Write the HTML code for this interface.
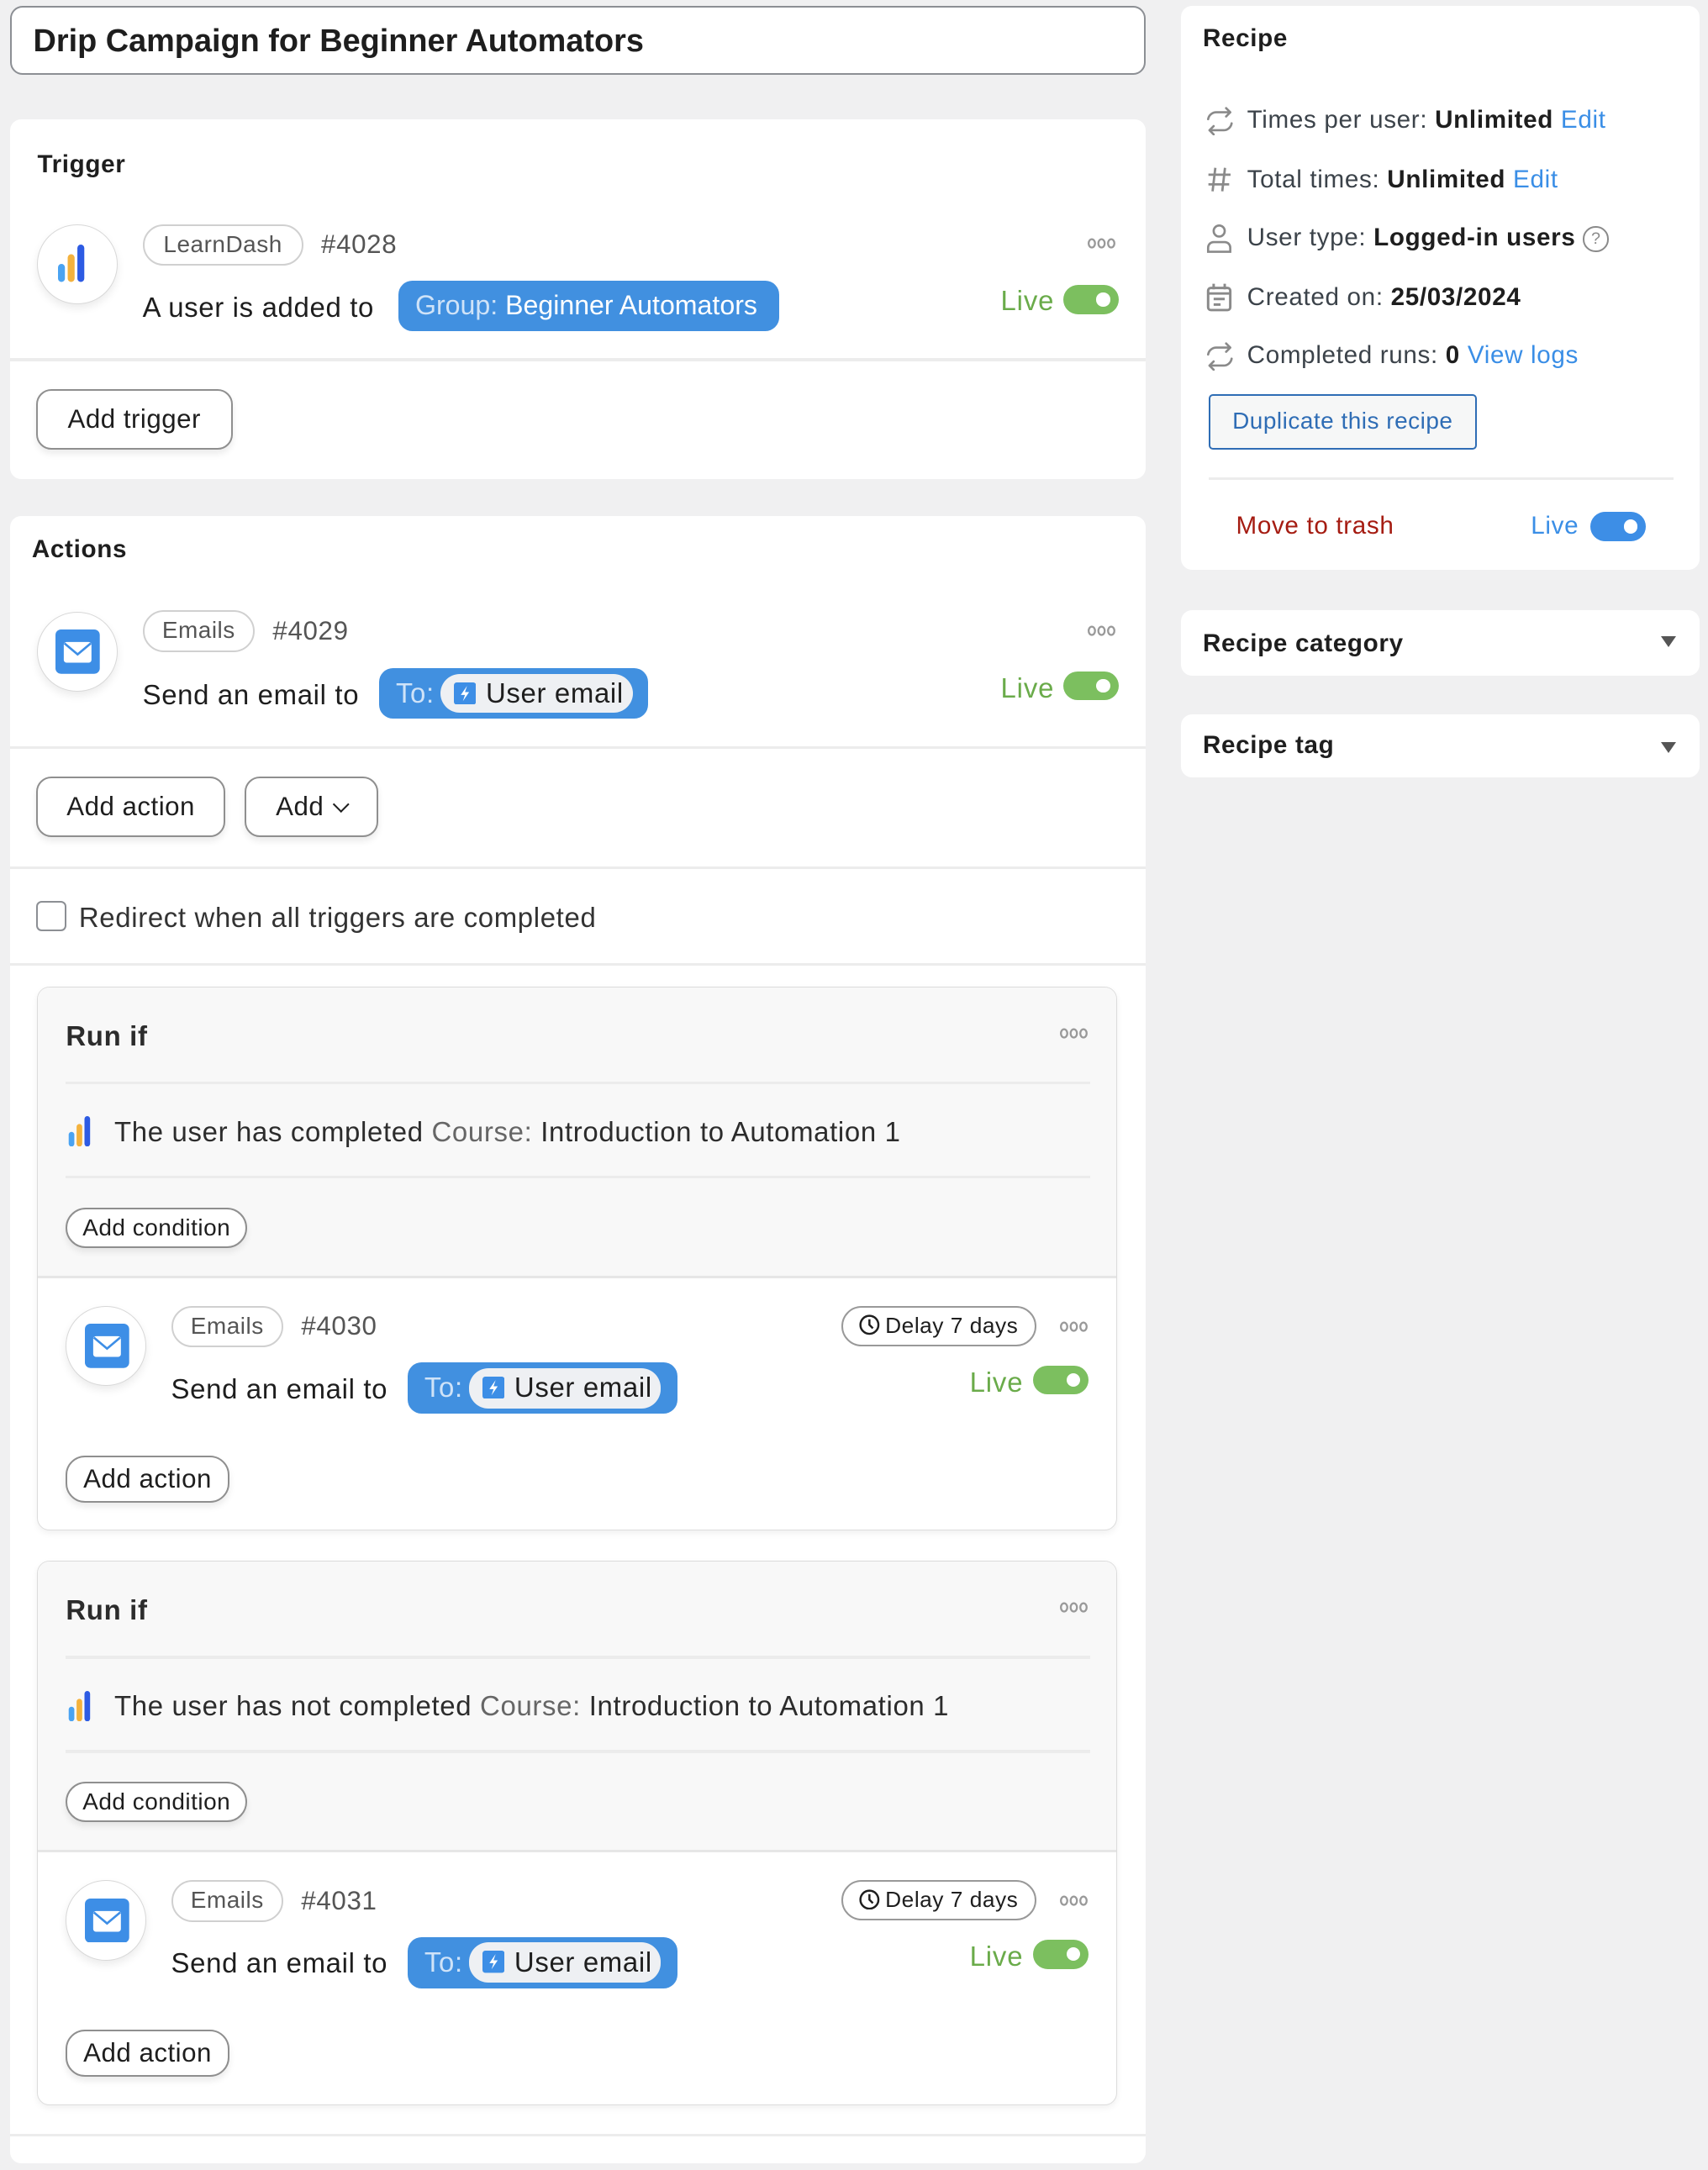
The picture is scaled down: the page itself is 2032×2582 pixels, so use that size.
<!DOCTYPE html>
<html><head><meta charset="utf-8"><style>
html,body{margin:0;padding:0;background:#f0f0f1;}
body{width:1234px;height:1568px;zoom:1.64668;position:relative;overflow:hidden;font-family:"Liberation Sans",sans-serif;color:#1e1e1e;}
.a{position:absolute;white-space:nowrap;}
.card{position:absolute;background:#fff;border-radius:8px;}
.t20{font-size:20px;line-height:24px;letter-spacing:0.4px;}
.t18{font-size:18px;line-height:22px;letter-spacing:0.4px;}
.b{font-weight:bold;}
.hr{position:absolute;height:2px;background:#ececec;}
.pill{position:absolute;border:1.5px solid #d0d0d0;border-radius:16px;box-sizing:border-box;color:#555;font-size:17px;text-align:center;background:#fff;letter-spacing:0.3px;white-space:nowrap;}
.btn{position:absolute;border:1.5px solid #8f8f8f;border-radius:11px;box-sizing:border-box;background:#fff;font-size:19px;color:#1e1e1e;text-align:center;box-shadow:0 3px 5px rgba(0,0,0,.08);letter-spacing:0.3px;white-space:nowrap;}
.circ{position:absolute;width:58px;height:58px;border-radius:50%;background:#fff;border:1px solid #d8d8d8;box-sizing:border-box;box-shadow:0 3px 6px rgba(0,0,0,.08);}
.live{position:absolute;color:#6aab4a;font-size:20px;line-height:24px;letter-spacing:0.5px;}
.tog{position:absolute;width:40px;height:21px;border-radius:11px;background:#7cbf5f;}
.tog:after{content:"";position:absolute;right:6px;top:5.5px;width:10px;height:10px;border-radius:50%;background:#fff;}
.blue{position:absolute;background:#4190e0;border-radius:10px;color:#fff;font-size:20px;letter-spacing:0.4px;white-space:nowrap;}
.ue{position:absolute;background:#eef0f3;border-radius:14px;color:#1e1e1e;font-size:20px;}
.run{position:absolute;left:27px;width:780px;height:393px;border:1px solid #dcdcdc;border-radius:9px;background:#fff;box-sizing:border-box;box-shadow:0 2px 5px rgba(0,0,0,.06);overflow:hidden;}
.run .top{position:absolute;left:0;top:0;width:100%;height:208px;background:#f8f8f8;border-bottom:2px solid #e6e6e6;}
.side{color:#3c434a;}
.lnk{color:#3a8ee6;}
</style></head><body>

<svg width="0" height="0" style="position:absolute">
<defs>
<g id="ld"><rect x="0" y="14" width="5" height="13" rx="2.5" fill="#4aa3f2"/><rect x="7" y="7" width="5" height="20" rx="2.5" fill="#f4b23d"/><rect x="14" y="0" width="5" height="27" rx="2.5" fill="#2d5be3"/></g>
<g id="em"><rect x="0" y="0" width="32" height="32" rx="4" fill="#3d8ee6"/><rect x="6" y="9" width="20" height="15" rx="2" fill="#fff"/><path d="M6.5 10 L16 18 L25.5 10" fill="none" stroke="#3d8ee6" stroke-width="1.6"/></g>
<g id="bolt"><rect x="0" y="0" width="16" height="16" rx="2" fill="#3d8ee6"/><path d="M9.5 2.5 L5 9 H8 L6.5 13.5 L11 7 H8 Z" fill="#fff"/></g>
<g id="dt" fill="none" stroke="#999" stroke-width="1.4"><ellipse cx="3" cy="4" rx="2.3" ry="3"/><ellipse cx="10" cy="4" rx="2.3" ry="3"/><ellipse cx="17" cy="4" rx="2.3" ry="3"/></g>
<g id="clk" fill="none" stroke="#1e1e1e" stroke-width="1.5"><circle cx="7.5" cy="7.5" r="6.5"/><path d="M7.5 3.5 V7.5 L10 10"/></g>
</defs></svg>

<!-- title -->
<div class="a" style="left:7px;top:4px;width:821px;height:50px;border:1.5px solid #8c8f94;border-radius:9px;background:#fff;box-sizing:border-box;"></div>
<div class="a b" style="left:24px;top:15px;font-size:23px;line-height:30px;color:#1e1e1e;">Drip Campaign for Beginner Automators</div>

<!-- Trigger card -->
<div class="card" style="left:7px;top:86px;width:821px;height:260px;"></div>
<div class="a b t18" style="left:27px;top:108px;">Trigger</div>
<div class="circ" style="left:27px;top:162px;"></div>
<svg class="a" style="left:42px;top:177px" width="30" height="30"><use href="#ld"/></svg>
<div class="pill" style="left:103px;top:162px;width:116px;height:30px;line-height:27px;">LearnDash</div>
<div class="a" style="left:232px;top:166px;font-size:19px;line-height:22px;color:#555;letter-spacing:0.4px">#4028</div>
<div class="a t20" style="left:103px;top:210px;">A user is added to</div>
<div class="blue" style="left:288px;top:203px;width:275px;height:36px;line-height:36px;letter-spacing:0;font-size:19.5px;"><span style="margin-left:12px;color:#cfe3f8">Group:</span> Beginner Automators</div>
<svg class="a" style="left:786px;top:172px" width="21" height="9"><use href="#dt"/></svg>
<div class="live" style="left:723px;top:205px;">Live</div>
<div class="tog" style="left:768px;top:206px;"></div>
<div class="hr" style="left:7px;top:259px;width:821px;"></div>
<div class="btn" style="left:26px;top:281px;width:142px;height:44px;line-height:41px;">Add trigger</div>

<!-- Actions card -->
<div class="card" style="left:7px;top:373px;width:821px;height:1190px;"></div>
<div class="a b t18" style="left:23px;top:386px;">Actions</div>
<div class="circ" style="left:27px;top:442px;"></div>
<svg class="a" style="left:40px;top:455px" width="32" height="32"><use href="#em"/></svg>
<div class="pill" style="left:103px;top:441px;width:81px;height:30px;line-height:27px;">Emails</div>
<div class="a" style="left:197px;top:445px;font-size:19px;line-height:22px;color:#555;letter-spacing:0.4px">#4029</div>
<div class="a t20" style="left:103px;top:490px;">Send an email to</div>
<div class="blue" style="left:274px;top:483px;width:194px;height:36px;"><span class="a" style="left:12px;top:6px;line-height:24px;color:#cfe3f8">To:</span>
 <div class="ue" style="left:44px;top:4px;width:139px;height:28px;"><svg class="a" style="left:10px;top:6px" width="16" height="16"><use href="#bolt"/></svg><span class="a" style="left:33px;top:2px;line-height:24px">User email</span></div></div>
<svg class="a" style="left:786px;top:452px" width="21" height="9"><use href="#dt"/></svg>
<div class="live" style="left:723px;top:485px;">Live</div>
<div class="tog" style="left:768px;top:485px;"></div>
<div class="hr" style="left:7px;top:539px;width:821px;"></div>
<div class="btn" style="left:26px;top:561px;width:137px;height:44px;line-height:41px;">Add action</div>
<div class="btn" style="left:177px;top:561px;width:96px;height:44px;line-height:41px;">Add <span style="display:inline-block;width:7px;height:7px;border-right:1.5px solid #1e1e1e;border-bottom:1.5px solid #1e1e1e;transform:rotate(45deg);position:relative;top:-4px;margin-left:3px"></span></div>
<div class="hr" style="left:7px;top:626px;width:821px;"></div>
<div class="a" style="left:26px;top:651px;width:22px;height:22px;border:1.5px solid #8c8f94;border-radius:4px;box-sizing:border-box;background:#fff"></div>
<div class="a t20" style="left:57px;top:651px;color:#333">Redirect when all triggers are completed</div>
<div class="hr" style="left:7px;top:696px;width:821px;"></div>

<!-- Run if 1 -->
<div class="run" style="top:713px;"><div class="top"></div>
 <div class="a b t20" style="left:20px;top:23px;color:#2c2c2c">Run if</div>
 <svg class="a" style="left:738px;top:29px" width="21" height="9"><use href="#dt"/></svg>
 <div class="hr" style="left:20px;top:68px;width:740px;"></div>
 <svg class="a" style="left:20px;top:93px" width="20" height="22" viewBox="0 0 19 27"><use href="#ld"/></svg>
 <div class="a t20" style="left:55px;top:92px;color:#2c2c2c">The user has completed <span style="color:#666">Course:</span> Introduction to Automation 1</div>
 <div class="hr" style="left:20px;top:136px;width:740px;"></div>
 <div class="btn" style="left:20px;top:159px;width:131px;height:29px;line-height:27px;font-size:17px;border-radius:15px;">Add condition</div>
 <div class="circ" style="left:20px;top:230px;"></div>
 <svg class="a" style="left:34px;top:243px" width="32" height="32"><use href="#em"/></svg>
 <div class="pill" style="left:96px;top:230px;width:81px;height:30px;line-height:27px;">Emails</div>
 <div class="a" style="left:190px;top:234px;font-size:19px;line-height:22px;color:#555;letter-spacing:0.4px">#4030</div>
 <div class="pill" style="left:580px;top:230px;width:141px;height:29px;line-height:26px;color:#1e1e1e;border-color:#999;border-radius:15px;font-size:16px;"><svg width="15" height="15" style="vertical-align:-2px;margin-right:4px"><use href="#clk"/></svg>Delay 7 days</div>
 <svg class="a" style="left:738px;top:241px" width="21" height="9"><use href="#dt"/></svg>
 <div class="a t20" style="left:96px;top:278px;">Send an email to</div>
 <div class="blue" style="left:267px;top:271px;width:195px;height:37px;"><span class="a" style="left:12px;top:6px;line-height:24px;color:#cfe3f8">To:</span>
  <div class="ue" style="left:44px;top:4px;width:139px;height:29px;"><svg class="a" style="left:10px;top:6px" width="16" height="16"><use href="#bolt"/></svg><span class="a" style="left:33px;top:2px;line-height:24px">User email</span></div></div>
 <div class="live" style="left:673px;top:273px;">Live</div>
 <div class="tog" style="left:719px;top:273px;"></div>
 <div class="btn" style="left:20px;top:338px;width:118px;height:34px;line-height:31px;border-radius:14px;">Add action</div>
</div>

<!-- Run if 2 -->
<div class="run" style="top:1128px;"><div class="top"></div>
 <div class="a b t20" style="left:20px;top:23px;color:#2c2c2c">Run if</div>
 <svg class="a" style="left:738px;top:29px" width="21" height="9"><use href="#dt"/></svg>
 <div class="hr" style="left:20px;top:68px;width:740px;"></div>
 <svg class="a" style="left:20px;top:93px" width="20" height="22" viewBox="0 0 19 27"><use href="#ld"/></svg>
 <div class="a t20" style="left:55px;top:92px;color:#2c2c2c">The user has not completed <span style="color:#666">Course:</span> Introduction to Automation 1</div>
 <div class="hr" style="left:20px;top:136px;width:740px;"></div>
 <div class="btn" style="left:20px;top:159px;width:131px;height:29px;line-height:27px;font-size:17px;border-radius:15px;">Add condition</div>
 <div class="circ" style="left:20px;top:230px;"></div>
 <svg class="a" style="left:34px;top:243px" width="32" height="32"><use href="#em"/></svg>
 <div class="pill" style="left:96px;top:230px;width:81px;height:30px;line-height:27px;">Emails</div>
 <div class="a" style="left:190px;top:234px;font-size:19px;line-height:22px;color:#555;letter-spacing:0.4px">#4031</div>
 <div class="pill" style="left:580px;top:230px;width:141px;height:29px;line-height:26px;color:#1e1e1e;border-color:#999;border-radius:15px;font-size:16px;"><svg width="15" height="15" style="vertical-align:-2px;margin-right:4px"><use href="#clk"/></svg>Delay 7 days</div>
 <svg class="a" style="left:738px;top:241px" width="21" height="9"><use href="#dt"/></svg>
 <div class="a t20" style="left:96px;top:278px;">Send an email to</div>
 <div class="blue" style="left:267px;top:271px;width:195px;height:37px;"><span class="a" style="left:12px;top:6px;line-height:24px;color:#cfe3f8">To:</span>
  <div class="ue" style="left:44px;top:4px;width:139px;height:29px;"><svg class="a" style="left:10px;top:6px" width="16" height="16"><use href="#bolt"/></svg><span class="a" style="left:33px;top:2px;line-height:24px">User email</span></div></div>
 <div class="live" style="left:673px;top:273px;">Live</div>
 <div class="tog" style="left:719px;top:273px;"></div>
 <div class="btn" style="left:20px;top:338px;width:118px;height:34px;line-height:31px;border-radius:14px;">Add action</div>
</div>
<div class="hr" style="left:7px;top:1542px;width:821px;"></div>

<!-- Sidebar -->
<div class="card" style="left:853px;top:4px;width:375px;height:408px;"></div>
<div class="a b t18" style="left:869px;top:17px;">Recipe</div>
<svg class="a" style="left:871px;top:77px" width="21" height="21" viewBox="0 0 21 21" fill="none" stroke="#8a8a8a" stroke-width="1.6" stroke-linecap="round" stroke-linejoin="round"><path d="M2 9 A6 6 0 0 1 8 4 H18 M15 1 L18 4 L15 7"/><path d="M19 12 A6 6 0 0 1 13 17 H3 M6 14 L3 17 L6 20"/></svg>
<div class="a t18 side" style="left:901px;top:76px;">Times per user: <b style="color:#1e1e1e">Unlimited</b> <span class="lnk">Edit</span></div>
<svg class="a" style="left:872px;top:120px" width="18" height="19" viewBox="0 0 18 19" fill="none" stroke="#8a8a8a" stroke-width="1.7"><path d="M6 1 L4 18 M13 1 L11 18 M1 6 H17 M1 13 H16"/></svg>
<div class="a t18 side" style="left:901px;top:119px;">Total times: <b style="color:#1e1e1e">Unlimited</b> <span class="lnk">Edit</span></div>
<svg class="a" style="left:871px;top:161px" width="20" height="22" viewBox="0 0 20 22" fill="none" stroke="#8a8a8a" stroke-width="1.6"><circle cx="10" cy="6" r="4"/><path d="M2 21 V18 A4 4 0 0 1 6 14 H14 A4 4 0 0 1 18 18 V21 Z"/></svg>
<div class="a t18 side" style="left:901px;top:161px;">User type: <b style="color:#1e1e1e">Logged-in users</b> <span style="display:inline-block;width:16px;height:16px;border:1.5px solid #8a8a8a;border-radius:50%;font-size:12px;line-height:16px;text-align:center;color:#8a8a8a;vertical-align:1px;letter-spacing:0">?</span></div>
<svg class="a" style="left:871px;top:204px" width="20" height="22" viewBox="0 0 20 22" fill="none" stroke="#8a8a8a" stroke-width="1.8"><rect x="2" y="4" width="16" height="16" rx="2"/><path d="M2 8 H18 M6 1 V5 M14 1 V5 M6 12 H14 M6 16 H11"/></svg>
<div class="a t18 side" style="left:901px;top:204px;">Created on: <b style="color:#1e1e1e">25/03/2024</b></div>
<svg class="a" style="left:871px;top:247px" width="21" height="21" viewBox="0 0 21 21" fill="none" stroke="#8a8a8a" stroke-width="1.6" stroke-linecap="round" stroke-linejoin="round"><path d="M2 9 A6 6 0 0 1 8 4 H18 M15 1 L18 4 L15 7"/><path d="M19 12 A6 6 0 0 1 13 17 H3 M6 14 L3 17 L6 20"/></svg>
<div class="a t18 side" style="left:901px;top:246px;">Completed runs: <b style="color:#1e1e1e">0</b> <span class="lnk">View logs</span></div>
<div class="a" style="left:873px;top:285px;width:194px;height:40px;border:1.5px solid #2f6db5;border-radius:3px;box-sizing:border-box;background:#f6f7f7;color:#2f6db5;font-size:17px;line-height:37px;text-align:center;letter-spacing:0.3px">Duplicate this recipe</div>
<div class="hr" style="left:873px;top:345px;width:336px;"></div>
<div class="a t18" style="left:893px;top:369px;color:#a51c12;">Move to trash</div>
<div class="a t18" style="left:1106px;top:369px;color:#3a8ee6;">Live</div>
<div class="tog" style="left:1149px;top:370px;background:#3d8ee6;"></div>

<div class="card" style="left:853px;top:441px;width:375px;height:47px;"></div>
<div class="a b t18" style="left:869px;top:454px;">Recipe category</div>
<div class="a" style="left:1200px;top:460px;width:0;height:0;border-left:5.5px solid transparent;border-right:5.5px solid transparent;border-top:8px solid #555;"></div>
<div class="card" style="left:853px;top:516px;width:375px;height:46px;"></div>
<div class="a b t18" style="left:869px;top:528px;">Recipe tag</div>
<div class="a" style="left:1200px;top:536px;width:0;height:0;border-left:5.5px solid transparent;border-right:5.5px solid transparent;border-top:8px solid #555;"></div>

</body></html>
